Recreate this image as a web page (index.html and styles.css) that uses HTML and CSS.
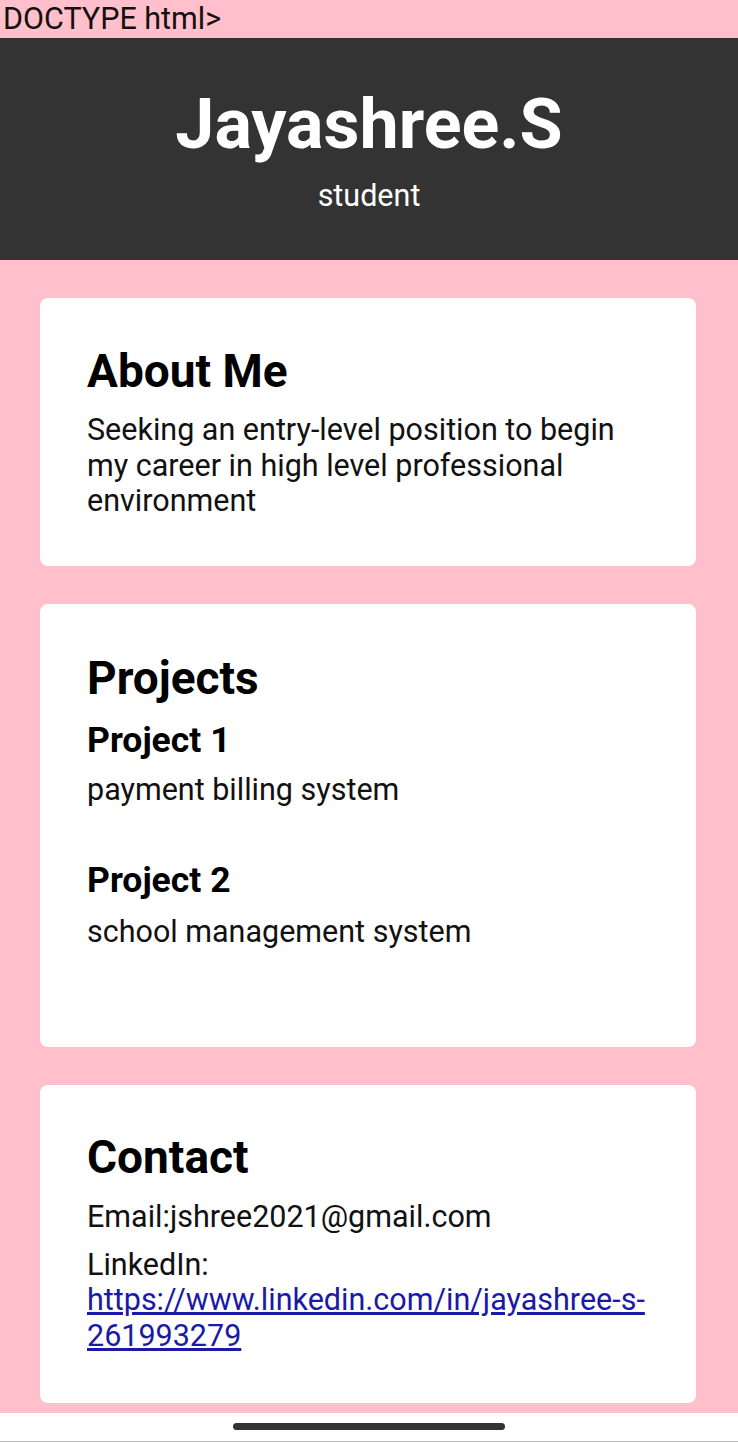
FILE: index.html
```html
<!DOCTYPE html>
<html lang="en">
<head>
<meta charset="utf-8">
<title>Jayashree.S</title>
<link rel="stylesheet" href="styles.css">
</head>
<body>
<div class="doctype">DOCTYPE html&gt;</div>
<header class="hero">
  <h1 class="hero-name">Jayashree.S</h1>
  <p class="hero-role">student</p>
</header>
<main class="content">
  <section class="card card-about">
    <h2 class="card-title">About Me</h2>
    <p class="text">Seeking an entry-level position to begin my career in high level professional environment</p>
  </section>
  <section class="card card-projects">
    <h2 class="card-title">Projects</h2>
    <div class="project">
      <h3 class="project-title">Project 1</h3>
      <p class="text">payment billing system</p>
    </div>
    <div class="project">
      <h3 class="project-title">Project 2</h3>
      <p class="text">school management system</p>
    </div>
  </section>
  <section class="card card-contact">
    <h2 class="card-title">Contact</h2>
    <p class="text email">Email:jshree2021@gmail.com</p>
    <p class="text linkedin">LinkedIn: <a class="link" href="#">https://www.linkedin.com/in/jayashree-s-261993279</a></p>
  </section>
</main>
<div class="navbar"><span class="handle"></span></div>
</body>
</html>
```

FILE: styles.css
```css
* { box-sizing: border-box; }
html, body { margin: 0; padding: 0; }
body {
  background: #ffc0cb;
  font-family: Roboto, "Noto Sans", Arial, sans-serif;
  color: #111;
  width: 738px;
}
.doctype {
  font-size: 30.5px;
  line-height: 38px;
  height: 38px;
  padding-left: 3px;
  color: #141010;
}
.hero {
  background: #333333;
  color: #fff;
  text-align: center;
  padding: 51px 0 49px;
  height: 222px;
}
.hero-name {
  margin: 0;
  font-size: 70px;
  line-height: 70px;
  font-weight: 700;
}
.hero-role {
  margin: 22px 0 0;
  font-size: 30.5px;
  line-height: 30px;
}
.content {
  display: flex;
  flex-direction: column;
  gap: 38px;
  padding: 38px 42px 10px 40px;
}
.card {
  background: #fff;
  border-radius: 8px;
  padding: 50px 47px 47px;
}
.card-title {
  margin: 0;
  font-size: 46px;
  line-height: 46px;
  font-weight: 700;
  color: #000;
}
.text {
  margin: 0;
  font-size: 30.5px;
  line-height: 35.5px;
  color: #111;
}
.card-about .text { margin-top: 18px; }
.card-about { padding-bottom: 47px; }
.card-projects { padding-top: 51px; padding-bottom: 46px; }
.project { margin-top: 22px; }
.project + .project { margin-top: 56px; }
.project:last-child { margin-bottom: 51px; }
.project-title {
  margin: 0 0 15px;
  font-size: 35.5px;
  line-height: 34px;
  font-weight: 700;
  color: #000;
}
.project + .project .project-title { margin-bottom: 17px; }
.card-contact { padding-top: 49px; padding-bottom: 50px; }
.email { margin-top: 19px; }
.linkedin { margin-top: 12.5px; }
.link { color: #1a1aa6; text-decoration: underline; }
.navbar {
  background: #fff;
  height: 30px;
  border-bottom: 2px solid #bdbdbd;
  display: flex;
  justify-content: center;
  padding-top: 10px;
}
.handle {
  display: block;
  width: 272px;
  height: 7px;
  border-radius: 4px;
  background: #333;
}
```
